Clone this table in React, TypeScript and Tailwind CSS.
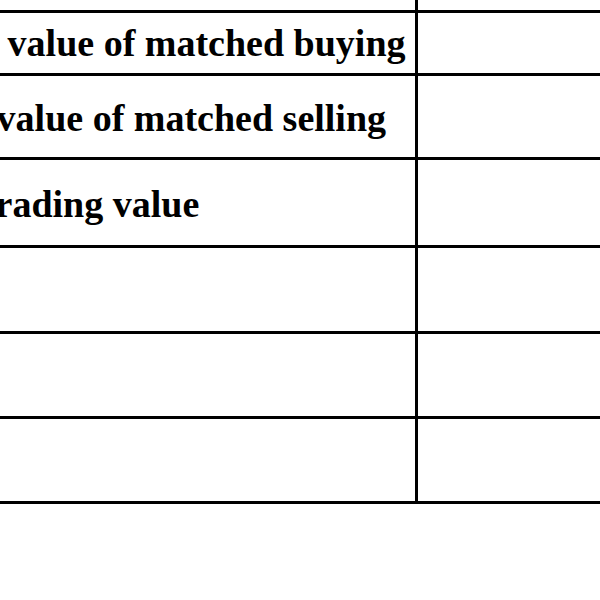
import React from "react";

const serif = { fontFamily: '"Liberation Serif", "Times New Roman", serif' };

export default function App() {
  return (
    <div className="w-[600px] h-[600px] overflow-hidden bg-white" style={serif}>
      <div className="w-[700px] flex flex-col">
        <div className="flex h-[13px] border-b-[3px] border-black">
          <div className="w-[418px] shrink-0 border-r-[3px] border-black" />
          <div className="flex-1" />
        </div>
        <div className="flex h-[63px] border-b-[3px] border-black">
          <div className="w-[418px] shrink-0 border-r-[3px] border-black overflow-hidden pt-[11px]">
            <div className="whitespace-nowrap font-bold text-[38px] leading-[38px] text-black ml-[-85px]">
              Total value of matched buying
            </div>
          </div>
          <div className="flex-1" />
        </div>
        <div className="flex h-[84px] border-b-[3px] border-black">
          <div className="w-[418px] shrink-0 border-r-[3px] border-black overflow-hidden pt-[23px]">
            <div className="whitespace-nowrap font-bold text-[38px] leading-[38px] text-black ml-[-96px]">
              Total value of matched selling
            </div>
          </div>
          <div className="flex-1" />
        </div>
        <div className="flex h-[88px] border-b-[3px] border-black">
          <div className="w-[418px] shrink-0 border-r-[3px] border-black overflow-hidden pt-[25px]">
            <div className="whitespace-nowrap font-bold text-[38px] leading-[38px] text-black ml-[-27px]">
              Trading value
            </div>
          </div>
          <div className="flex-1" />
        </div>
        <div className="flex h-[86px] border-b-[3px] border-black">
          <div className="w-[418px] shrink-0 border-r-[3px] border-black" />
          <div className="flex-1" />
        </div>
        <div className="flex h-[85px] border-b-[3px] border-black">
          <div className="w-[418px] shrink-0 border-r-[3px] border-black" />
          <div className="flex-1" />
        </div>
        <div className="flex h-[85px] border-b-[3px] border-black">
          <div className="w-[418px] shrink-0 border-r-[3px] border-black" />
          <div className="flex-1" />
        </div>
      </div>
    </div>
  );
}
